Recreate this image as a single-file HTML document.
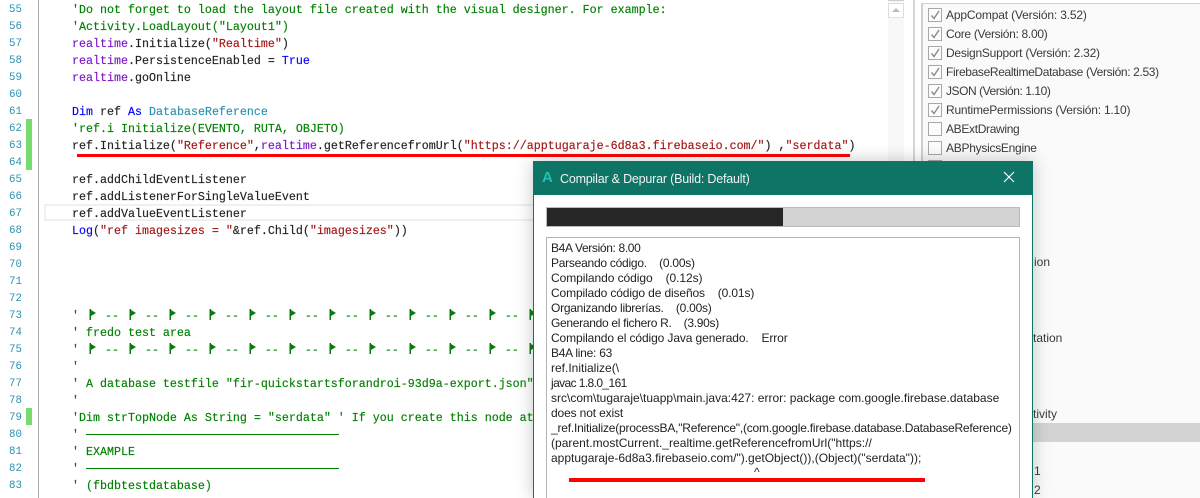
<!DOCTYPE html>
<html><head><meta charset="utf-8">
<style>
html,body{margin:0;padding:0;background:#fff}
#r{position:relative;width:1200px;height:498px;overflow:hidden;background:#fff}
.a{position:absolute}
.n{position:absolute;width:18px;text-align:right;left:4px;margin-top:1px;font:10.8px/17px "Liberation Mono",monospace;color:#2b91af;white-space:pre}
.c{position:absolute;left:72px;margin-top:1px;font:11.667px/17px "Liberation Mono",monospace;color:#222;white-space:pre;-webkit-text-stroke:.15px currentColor}
.g{color:#008000}.b{color:#0000ff}.s{color:#a31515}.p{color:#7a18c8}.t{color:#2b91af}
.f{display:inline-block;width:12px;height:12px;vertical-align:-2px}
.l{position:absolute;left:946px;margin-top:1px;font:12px/19px "Liberation Sans",sans-serif;color:#3a3a3a;white-space:pre}
.k{position:absolute;left:928px;width:12px;height:12px;border:1px solid #a8a8a8;background:#fcfcfc}
.k svg{position:absolute;left:1px;top:1px}
.d{font:12px/15px "Liberation Sans",sans-serif;color:#222;white-space:pre;position:absolute;left:551px;margin-top:1px}
</style></head><body><div id="r">

<div class="a" style="left:38px;top:0;width:1px;height:498px;background:#aaa"></div>
<div class="a" style="left:26px;top:119px;width:6px;height:51px;background:#76dc6e"></div>
<div class="a" style="left:26px;top:408px;width:6px;height:17px;background:#76dc6e"></div>
<div class="a" style="left:44px;top:204px;width:600px;height:13px;border:2px solid #f0f0f0"></div>

<div class="n" style="top:1px">55</div><div class="n" style="top:18px">56</div><div class="n" style="top:35px">57</div><div class="n" style="top:52px">58</div><div class="n" style="top:69px">59</div><div class="n" style="top:86px">60</div><div class="n" style="top:103px">61</div><div class="n" style="top:120px">62</div><div class="n" style="top:137px">63</div><div class="n" style="top:154px">64</div><div class="n" style="top:171px">65</div><div class="n" style="top:188px">66</div><div class="n" style="top:205px">67</div><div class="n" style="top:222px">68</div><div class="n" style="top:239px">69</div><div class="n" style="top:256px">70</div><div class="n" style="top:273px">71</div><div class="n" style="top:290px">72</div><div class="n" style="top:307px">73</div><div class="n" style="top:324px">74</div><div class="n" style="top:341px">75</div><div class="n" style="top:358px">76</div><div class="n" style="top:375px">77</div><div class="n" style="top:392px">78</div><div class="n" style="top:409px">79</div><div class="n" style="top:426px">80</div><div class="n" style="top:443px">81</div><div class="n" style="top:460px">82</div><div class="n" style="top:477px">83</div>

<div class="c g" style="top:1px">'Do not forget to load the layout file created with the visual designer. For example:</div>
<div class="c g" style="top:18px">'Activity.LoadLayout("Layout1")</div>
<div class="c" style="top:35px"><span class="p">realtime</span>.Initialize(<span class="s">"Realtime"</span>)</div>
<div class="c" style="top:52px"><span class="p">realtime</span>.PersistenceEnabled = <span class="b">True</span></div>
<div class="c" style="top:69px"><span class="p">realtime</span>.goOnline</div>
<div class="c" style="top:103px"><span class="b">Dim</span> ref <span class="b">As</span> <span class="t">DatabaseReference</span></div>
<div class="c g" style="top:120px">'ref.i Initialize(EVENTO, RUTA, OBJETO)</div>
<div class="c" style="top:137px">ref.Initialize(<span class="s">"Reference"</span>,<span class="p">realtime</span>.getReferencefromUrl(<span class="s">"https://apptugaraje-6d8a3.firebaseio.com/"</span>) ,<span class="s">"serdata"</span>)</div>
<div class="a" style="left:77px;top:154px;width:773px;height:3px;background:#f00"></div>
<div class="c" style="top:171px">ref.addChildEventListener</div>
<div class="c" style="top:188px">ref.addListenerForSingleValueEvent</div>
<div class="c" style="top:205px">ref.addValueEventListener</div>
<div class="c" style="top:222px"><span class="b">Log</span>(<span class="s">"ref imagesizes = "</span>&amp;ref.Child(<span class="s">"imagesizes"</span>))</div>

<svg width="0" height="0" style="position:absolute"><defs><g id="fl"><rect x="3" y="0" width="1" height="11" fill="#c9b020"/><rect x="4" y="0" width="1" height="11" fill="#0a7a0a"/><path d="M5 1L10 4L5 7Z" fill="#0a7a0a"/></g></defs></svg>

<div class="c g" style="top:307px">' <svg class="f"><use href="#fl"/></svg> -- <svg class="f"><use href="#fl"/></svg> -- <svg class="f"><use href="#fl"/></svg> -- <svg class="f"><use href="#fl"/></svg> -- <svg class="f"><use href="#fl"/></svg> -- <svg class="f"><use href="#fl"/></svg> -- <svg class="f"><use href="#fl"/></svg> -- <svg class="f"><use href="#fl"/></svg> -- <svg class="f"><use href="#fl"/></svg> -- <svg class="f"><use href="#fl"/></svg> -- <svg class="f"><use href="#fl"/></svg> -- <svg class="f"><use href="#fl"/></svg> --</div>
<div class="c g" style="top:324px">' fredo test area</div>
<div class="c g" style="top:341px">' <svg class="f"><use href="#fl"/></svg> -- <svg class="f"><use href="#fl"/></svg> -- <svg class="f"><use href="#fl"/></svg> -- <svg class="f"><use href="#fl"/></svg> -- <svg class="f"><use href="#fl"/></svg> -- <svg class="f"><use href="#fl"/></svg> -- <svg class="f"><use href="#fl"/></svg> -- <svg class="f"><use href="#fl"/></svg> -- <svg class="f"><use href="#fl"/></svg> -- <svg class="f"><use href="#fl"/></svg> -- <svg class="f"><use href="#fl"/></svg> -- <svg class="f"><use href="#fl"/></svg> --</div>
<div class="c g" style="top:358px">'</div>
<div class="c g" style="top:375px">' A database testfile "fir-quickstartsforandroi-93d9a-export.json"</div>
<div class="c g" style="top:392px">'</div>
<div class="c g" style="top:409px">'Dim strTopNode As String = "serdata" ' If you create this node at</div>
<div class="c g" style="top:426px">'</div>
<div class="a" style="left:86px;top:434px;width:253px;height:1px;background:#008000"></div>
<div class="c g" style="top:443px">' EXAMPLE</div>
<div class="c g" style="top:460px">'</div>
<div class="a" style="left:86px;top:468px;width:253px;height:1px;background:#008000"></div>
<div class="c g" style="top:477px">' (fbdbtestdatabase)</div>

<!-- scrollbar and right pane -->
<div class="a" style="left:888px;top:0;width:16px;height:498px;background:#f8f8f8"></div>
<div class="a" style="left:888px;top:3px;width:14px;height:13px;border:1px solid #ddd;background:#fff"></div>
<div class="a" style="left:892px;top:8px;width:0;height:0;border-left:4px solid transparent;border-right:4px solid transparent;border-bottom:4px solid #bbb"></div>
<div class="a" style="left:888px;top:0;width:16px;height:1px;background:#ccc"></div>
<div class="a" style="left:904px;top:0;width:9px;height:498px;background:#fff"></div>
<div class="a" style="left:913px;top:0;width:2px;height:498px;background:#d6d6d6"></div>
<div class="a" style="left:915px;top:0;width:6px;height:498px;background:#fff"></div>
<div class="a" style="left:921px;top:3px;width:279px;height:495px;background:#fafafa;border-left:2px solid #d0d0d0;border-top:1px solid #d0d0d0;box-sizing:border-box"></div>

<div class="k" style="top:8px"><svg width="10" height="10"><path d="M1.5 5.5L4 8.5L9 1" stroke="#8f8f8f" stroke-width="1.5" fill="none"/></svg></div>
<div class="k" style="top:27px"><svg width="10" height="10"><path d="M1.5 5.5L4 8.5L9 1" stroke="#8f8f8f" stroke-width="1.5" fill="none"/></svg></div>
<div class="k" style="top:46px"><svg width="10" height="10"><path d="M1.5 5.5L4 8.5L9 1" stroke="#8f8f8f" stroke-width="1.5" fill="none"/></svg></div>
<div class="k" style="top:65px"><svg width="10" height="10"><path d="M1.5 5.5L4 8.5L9 1" stroke="#8f8f8f" stroke-width="1.5" fill="none"/></svg></div>
<div class="k" style="top:84px"><svg width="10" height="10"><path d="M1.5 5.5L4 8.5L9 1" stroke="#8f8f8f" stroke-width="1.5" fill="none"/></svg></div>
<div class="k" style="top:103px"><svg width="10" height="10"><path d="M1.5 5.5L4 8.5L9 1" stroke="#8f8f8f" stroke-width="1.5" fill="none"/></svg></div>
<div class="k" style="top:122px"></div>
<div class="k" style="top:141px"></div>
<div class="k" style="top:160px"></div>

<div class="l" style="top:5px;letter-spacing:-.16px">AppCompat (Versión: 3.52)</div>
<div class="l" style="top:24px;letter-spacing:-.3px">Core (Versión: 8.00)</div>
<div class="l" style="top:43px;letter-spacing:-.24px">DesignSupport (Versión: 2.32)</div>
<div class="l" style="top:62px;letter-spacing:-.35px">FirebaseRealtimeDatabase (Versión: 2.53)</div>
<div class="l" style="top:81px;letter-spacing:-.45px">JSON (Versión: 1.10)</div>
<div class="l" style="top:100px;letter-spacing:-.21px">RuntimePermissions (Versión: 1.10)</div>
<div class="l" style="top:119px;letter-spacing:-.33px">ABExtDrawing</div>
<div class="l" style="top:138px;letter-spacing:-.27px">ABPhysicsEngine</div>

<div class="l" style="left:1034px;top:252px">ion</div>
<div class="l" style="left:1033px;top:328px">tation</div>
<div class="l" style="left:1033px;top:404px">tivity</div>
<div class="a" style="left:1033px;top:423px;width:167px;height:19px;background:#d3d3d3"></div>
<div class="l" style="left:1034px;top:461px">1</div>
<div class="l" style="left:1034px;top:480px">2</div>

<!-- dialog -->
<div class="a" style="left:533px;top:161px;width:500px;height:337px;background:#fff;box-shadow:0 0 16px rgba(40,60,60,.28);border-left:1px solid #0d7466;border-right:1px solid #0d7466;box-sizing:border-box"></div>
<div class="a" style="left:533px;top:161px;width:500px;height:34px;background:#0d7466"></div>
<div class="a" style="left:542px;top:169px;font:bold 15px/17px 'Liberation Sans',sans-serif;color:#25c0ae">A</div>
<div class="a" style="left:560px;top:171px;font:12.5px/16px 'Liberation Sans',sans-serif;color:#f2f2f2;white-space:pre;letter-spacing:-.2px">Compilar &amp; Depurar (Build: Default)</div>
<svg class="a" style="left:1003px;top:171px" width="12" height="12"><path d="M1 1L11 11M11 1L1 11" stroke="#fff" stroke-width="1.2" fill="none"/></svg>

<div class="a" style="left:546px;top:207px;width:474px;height:20px;background:#d2d2d2;box-sizing:border-box;border:1px solid #bbb"></div>
<div class="a" style="left:547px;top:208px;width:236px;height:18px;background:#262626"></div>
<div class="a" style="left:546px;top:237px;width:474px;height:261px;background:#fff;box-sizing:border-box;border:1px solid #b4b4b4;border-bottom:none"></div>

<div class="d" style="top:240px;letter-spacing:-.35px">B4A Versión: 8.00</div>
<div class="d" style="top:255px;letter-spacing:-.25px">Parseando código.    (0.00s)</div>
<div class="d" style="top:270px;letter-spacing:-.07px">Compilando código    (0.12s)</div>
<div class="d" style="top:285px;letter-spacing:-.13px">Compilado código de diseños    (0.01s)</div>
<div class="d" style="top:300px;letter-spacing:-.25px">Organizando librerías.    (0.00s)</div>
<div class="d" style="top:315px;letter-spacing:-.3px">Generando el fichero R.    (3.90s)</div>
<div class="d" style="top:330px;letter-spacing:-.11px">Compilando el código Java generado.    Error</div>
<div class="d" style="top:345px;letter-spacing:-.25px">B4A line: 63</div>
<div class="d" style="top:360px">ref.Initialize(\</div>
<div class="d" style="top:375px;letter-spacing:-.6px">javac 1.8.0_161</div>
<div class="d" style="top:390px">src\com\tugaraje\tuapp\main.java:427: error: package com.google.firebase.database</div>
<div class="d" style="top:405px;letter-spacing:-.14px">does not exist</div>
<div class="d" style="top:420px;letter-spacing:-.21px">_ref.Initialize(processBA,"Reference",(com.google.firebase.database.DatabaseReference)</div>
<div class="d" style="top:435px;letter-spacing:.03px">(parent.mostCurrent._realtime.getReferencefromUrl("https://</div>
<div class="d" style="top:450px">apptugaraje-6d8a3.firebaseio.com/").getObject()),(Object)("serdata"));</div>
<div class="d" style="left:754px;top:464px">^</div>
<div class="a" style="left:569px;top:478px;width:356px;height:4px;background:#f00"></div>

</div></body></html>
